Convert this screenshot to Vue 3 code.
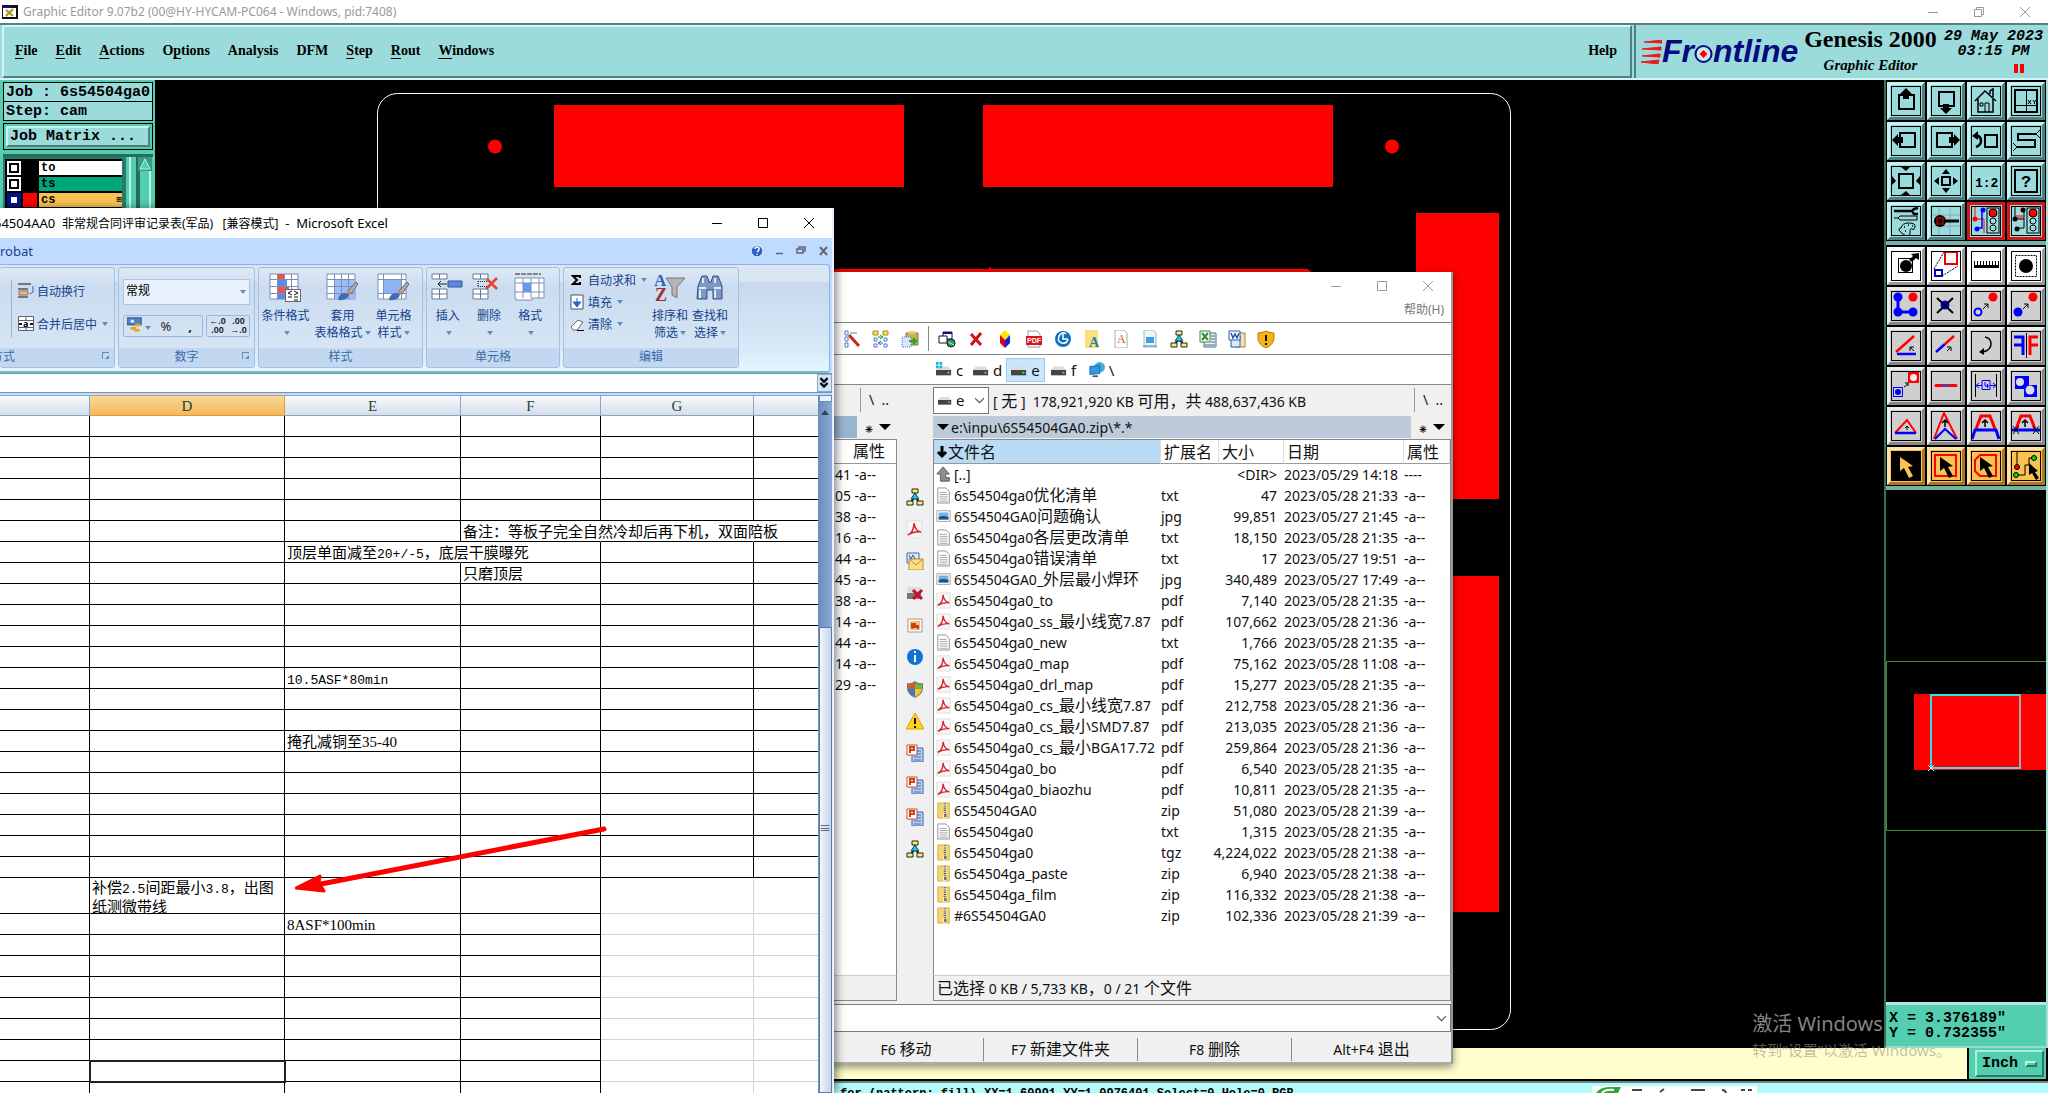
<script setup>
const menus = [
  ['', 'F', 'ile'], ['', 'E', 'dit'], ['', 'A', 'ctions'], ['O', 'p', 'tions'], ['Analysis', '', ''],
  ['DFM', '', ''], ['', 'S', 'tep'], ['', 'R', 'out'], ['', 'W', 'indows'],
]

const layers = [
  { name: 'to', bg: '#ffffff', color: '#000000' },
  { name: 'ts', bg: '#00a67c', color: '#000000' },
  { name: 'cs', bg: '#f9c252', color: '#ff0000', active: true },
]

const cursor = '<path d="M9 6v14l4-3 5 10 4-2-5-9 5-1z"/>'
const light = '<rect x="16" y="2" width="12" height="25" fill="none" stroke="#000"/><circle cx="22" cy="7" r="4" fill="#f00" stroke="#000"/><circle cx="22" cy="15" r="3" fill="none" stroke="#000"/><circle cx="22" cy="22" r="3" fill="none" stroke="#000"/>'
const smallArrow = '<path d="M12 18l5-5M13 13h4v4" fill="none" stroke="#000"/>'
const upArrow = '<path d="M14 16v-7M11 12l3-3 3 3" fill="none" stroke="#000" stroke-width="1.5"/>'

const viewTools = [
  ['Pan up', '<rect x="8" y="9" width="15" height="14" fill="none" stroke="#000" stroke-width="2"/><path d="M15 2l6 6h-3v5h-6v-5h-3z"/>'],
  ['Pan down', '<rect x="8" y="6" width="15" height="14" fill="none" stroke="#000" stroke-width="2"/><path d="M12 18h6v4h3l-6 6-6-6h3z"/>'],
  ['Home', '<path d="M4 15l10-10 11 10M7 13v13h15V13M19 8V5l3-2v8" fill="none" stroke="#000" stroke-width="1.5"/><path d="M14 26v-9h4v9M9 17h3v3h-3z" fill="none" stroke="#000"/>'],
  ['Coordinates', '<rect x="4" y="4" width="22" height="22" fill="none" stroke="#000" stroke-width="2"/><path d="M15.500 4v22M4 19.500h22M17 14l3 4M20 14l-3 4M22 14l1.500 2 1.500-2M23.500 16v2" fill="none" stroke="#000"/>'],
  ['Pan left', '<rect x="9" y="7" width="15" height="14" fill="none" stroke="#000" stroke-width="2"/><path d="M1 14l6-6v3h5v6h-5v3z"/>'],
  ['Pan right', '<rect x="6" y="7" width="15" height="14" fill="none" stroke="#000" stroke-width="2"/><path d="M29 14l-6-6v3h-5v6h5v3z"/>'],
  ['Previous view', '<rect x="14" y="9" width="12" height="12" fill="none" stroke="#000" stroke-width="2"/><path d="M4 10h3q3 1 3 5t-5 6" fill="none" stroke="#000" stroke-width="2.500"/><path d="M1 10l6-5v9z"/>'],
  ['Serpentine', '<path d="M25 8H7v6h17v7H6" fill="none" stroke="#000" stroke-width="2"/><path d="M25 8l4-4M25 8l4 4M6 21l-4-4M6 21l-4 4" stroke="#000"/>'],
  ['Zoom out', '<rect x="8" y="8" width="14" height="14" fill="none" stroke="#000" stroke-width="2"/><path d="M10 1h9l-4 4zM10 29h9l-4-4zM1 10v9l4-4zM29 10v9l-4-4z"/>'],
  ['Zoom in', '<rect x="11" y="11" width="8" height="8" fill="none" stroke="#000" stroke-width="2"/><path d="M11 8h8l-4-5zM11 22h8l-4 5zM8 11v8l-5-4zM22 11v8l5-4z"/>'],
  ['Scale', '<text x="4" y="21" font-family="Liberation Mono" font-weight="700" font-size="13">1:2</text>'],
  ['Query', '<rect x="4" y="4" width="22" height="22" fill="none" stroke="#000" stroke-width="2"/><text x="10" y="21" font-family="Liberation Mono" font-weight="700" font-size="17">?</text>'],
  ['Setup', '<path d="M3 5h17M27 2l-4 1-2 2 2 3 4 0" fill="none" stroke="#000" stroke-width="2.500"/><path d="M3 12h4l2-2h17v4H9l-2-2M10 22q1-5 8-5t6 4-3 2-2 4-7 1-2-6z" fill="none" stroke="#000"/><path d="M13 21h1M17 19h1M21 20h1M14 25h1" stroke="#000" stroke-width="1.500"/>'],
  ['Grid snap', '<path d="M8 0v30M19 0v30M0 9h30M0 20h30" stroke="#8ab" /><circle cx="9" cy="15" r="6"/><rect x="6" y="12" width="6" height="6" fill="none" stroke="#f00"/><path d="M14 15h14" stroke="#000" stroke-width="3"/>'],
  ['Online check', '<path d="M4 1v12h9v14" fill="none" stroke="#f00"/><path d="M11 4v18H5" fill="none" stroke="#00f" stroke-width="1.500"/><circle cx="4" cy="13" r="2.500" fill="#f00"/><circle cx="12" cy="4" r="2.500" fill="#00f"/><circle cx="6" cy="23" r="2.500" fill="#00f"/>' + light, 'red'],
  ['Spacing check', '<path d="M4 1v12h9M13 4v18H7" fill="none" stroke="#000"/><path d="M6 13V9M8 13V9M10 13V9M12 13V9" stroke="#f00"/><circle cx="4" cy="13" r="2.500"/><circle cx="12" cy="4" r="2.500"/><circle cx="6" cy="23" r="2.500"/>' + light, 'red'],
]

const editTools = [
  ['Resize', '<rect x="7.500" y="7.500" width="14" height="14" fill="none" stroke="#000"/><circle cx="15" cy="15" r="6"/><path d="M18 9l4-4-2-2 8-1v7l-3-2-4 4z"/>', 'white'],
  ['Transform', '<path d="M3 18L13 1M11 25l16-10" stroke="#000" stroke-dasharray="2 1"/><rect x="14" y="1" width="12" height="12" fill="none" stroke="#e00" stroke-width="2"/><rect x="4" y="19" width="7" height="6" fill="none" stroke="#00c" stroke-width="2"/>', 'white'],
  ['Measure', '<path d="M3 17h25V10h-1v4h-2v-4h-1v4h-2v-4h-1v4h-2v-4h-1v4h-2v-4h-1v4h-2v-4h-1v4h-2v-4H9v4H7v-4H6v4H4v-4H3z"/>', 'white'],
  ['Select pad', '<rect x="4.500" y="4.500" width="21" height="21" fill="none" stroke="#000" stroke-dasharray="2 1"/><circle cx="15" cy="15" r="7"/>', 'white'],
  ['Copy pad', '<path d="M7 6v15h15" fill="none" stroke="#00f" stroke-width="3"/><circle cx="7" cy="6" r="4.500" fill="#00f"/><circle cx="7" cy="21" r="4.500" fill="#00f"/><circle cx="22" cy="21" r="4.500" fill="#00f"/><circle cx="22" cy="6" r="4.500" fill="#f00"/>'],
  ['Delete', '<circle cx="14" cy="14" r="4.500" fill="#00f"/><path d="M6 7l16 15M22 7L6 22" stroke="#000" stroke-width="2"/>'],
  ['Copy', '<circle cx="7" cy="21" r="3.500" fill="none" stroke="#00f" stroke-width="2"/><circle cx="22" cy="6" r="4.500" fill="#f00"/>' + smallArrow],
  ['Move', '<circle cx="7" cy="21" r="4.500" fill="#00f"/><circle cx="22" cy="6" r="4.500" fill="#f00"/>' + smallArrow],
  ['Rotate line', '<path d="M6 23h19" stroke="#00f" stroke-width="2.500"/><path d="M5 21L23 5" stroke="#f00" stroke-width="2.500"/><path d="M23 20l-4-4M19 20v-4h4" fill="none" stroke="#000"/>'],
  ['Stretch line', '<path d="M5 21l9-8" stroke="#00f" stroke-width="2.500"/><path d="M14 13l9-8" stroke="#f00" stroke-width="2.500"/><path d="M16 20l4-4M16 16h4v4" fill="none" stroke="#000"/>'],
  ['Turn', '<path d="M14 6q6 1 6 7t-8 8" fill="none" stroke="#000" stroke-width="1.500"/><path d="M8 21l5-4v7z"/>'],
  ['Mirror', '<path d="M15.500 2v25" stroke="#000"/><path d="M3 6h9v18M3 14h8" fill="none" stroke="#00f" stroke-width="3"/><path d="M27 6h-8v18M27 14h-8" fill="none" stroke="#f00" stroke-width="3"/>'],
  ['Replace', '<path d="M17 1h11v11H17z" fill="#f00"/><circle cx="22.500" cy="6.500" r="3.500" fill="#eee"/><rect x="2.500" y="16.500" width="9" height="9" fill="none" stroke="#00f"/><circle cx="7" cy="21" r="3" fill="#00f"/><path d="M13 16l4-3M14 12h3v3" fill="none" stroke="#000"/>'],
  ['Merge line', '<path d="M5 14.500h20" stroke="#f00" stroke-width="3" stroke-linecap="round"/><path d="M11 14.500h8" stroke="#44c" stroke-width="2"/>'],
  ['Gap', '<path d="M4.500 3v23M25.500 3v23" stroke="#000"/><path d="M5 14.500h6M19 14.500h6M8 12l-3 2.500 3 2.500M22 12l3 2.500-3 2.500M11 9.500h8v9h-8zM14 11v4h4M16.500 13v4" fill="none" stroke="#00f"/>'],
  ['Fill', '<path d="M4 5h14v9h8v12H13v-8H4z" fill="#00f"/><circle cx="9" cy="11" r="4" fill="#ddd"/><circle cx="19" cy="19" r="4.500" fill="#ddd"/>'],
  ['Triangle', '<path d="M4 22L16 9l9 13" fill="none" stroke="#f00" stroke-width="2"/><path d="M4 22h21" stroke="#00f" stroke-width="2.500"/><path d="M16 19v-4M14 17l2-2 2 2" fill="none" stroke="#000"/>'],
  ['Peak', '<path d="M3 28L13 2l13 26" fill="none" stroke="#f00" stroke-width="2"/><path d="M4 28l10-10 11 10" fill="none" stroke="#00f" stroke-width="2"/>' + upArrow],
  ['Trapeze', '<path d="M5 18L10 5h9l5 13" fill="none" stroke="#f00" stroke-width="3"/><path d="M1 28l3-9h21l3 9" fill="none" stroke="#00f" stroke-width="3"/>' + upArrow],
  ['Trapeze cut', '<path d="M5 18L10 5h9l5 13" fill="none" stroke="#f00" stroke-width="3"/><path d="M0 19h29" stroke="#00f" stroke-width="3"/><path d="M2 15l6 8M8 15l-6 8M22 15l6 8M28 15l-6 8" stroke="#000"/>' + upArrow],
  ['Select', '<path d="M0 0h30v30H0z"/><g fill="#f9c252">' + cursor + '</g>', 'gold'],
  ['Select frame', '<rect x="4" y="4" width="21" height="21" fill="none" stroke="#f00" stroke-width="2"/>' + cursor, 'gold'],
  ['Select polygon', '<path d="M9 4h16v21H9l-5-5V9z" fill="none" stroke="#f00" stroke-width="2"/>' + cursor, 'gold'],
  ['Select net', '<path d="M6 1v14M5 24h9V14h4V7h5" fill="none" stroke="#000"/><circle cx="6" cy="16" r="2.500" fill="#f00" stroke="#000"/><circle cx="5" cy="24" r="2.500" fill="#0d0" stroke="#000"/><circle cx="23" cy="7" r="2.500" fill="#0d0" stroke="#000"/><path d="M18 12v12l3-2 4 7 3-2-4-6 3-1z"/>', 'gold'],
]

const brush = '<path d="M30 9l-8 9 3 3 7-10z" fill="#a8adb5" stroke="#667"/><path d="M12 27q1-7 7-7l4 1q-1 7-11 6z" fill="#3d6cb4"/><path d="M20 18l4 4 1-2-3-3z" fill="#d58a3a"/>'
const gridIcon = (extra) => '<path d="M1 1h28v25H1z" fill="#fff" stroke="#7b90b5"/>' + extra + '<path d="M1 6.500h28M1 13.500h28M1 20.500h28M8.500 1v25M15.500 1v25M22.500 1v25" stroke="#7b90b5"/>'
const styleTools = [
  { lines: ['条件格式', ''], icon: gridIcon('<path d="M8 1h7v6H8zM8 13h12v7H8z" fill="#ee5148"/><path d="M8 7h10v6H8zM8 20h7v6H8z" fill="#5b8be8"/>') + '<rect x="16.500" y="16.500" width="15" height="12" fill="#fff" stroke="#667"/><path d="M23 18l-4 2 4 2M19 24h4M25 18l4 2-4 2M25 24h4M25 27h4" fill="none" stroke="#111"/>' },
  { lines: ['套用', '表格格式'], icon: gridIcon('<path d="M8 6h21v20H8z" fill="#9dbbf5"/>') + brush },
  { lines: ['单元格', '样式'], icon: '<path d="M1 1h28v25H1z" fill="#fff" stroke="#7b90b5"/><path d="M1 6.500h28M1 20.500h28M6.500 1v25M24.500 1v25" stroke="#7b90b5"/><path d="M7 7h17v13H7z" fill="#8fb2f4"/>' + brush },
]
const rows2 = '<path d="M1 1h15v5H1zM8.500 1v5M1 16h15v10H1zM1 21h15M8.500 16v10" fill="#fff" stroke="#667a9c"/>'
const cellTools = [
  { lines: ['插入', ''], icon: rows2 + '<path d="M17 8h14v6H17z" fill="#5b8be0" stroke="#3357a0"/><path d="M7 11h9M10 8l-3 3 3 3" fill="none" stroke="#222"/>' },
  { lines: ['删除', ''], icon: rows2 + '<path d="M6 8.500h10M6 13.500h10M6 8v6" stroke="#222" stroke-dasharray="1 1" fill="none"/><path d="M15 6l10 10M25 5L14 16" stroke="#e6402c" stroke-width="2.500"/>' },
  { lines: ['格式', ''], icon: '<path d="M1 1h26" stroke="#222" stroke-dasharray="5 1"/><path d="M1 5h29v20H18v2H2v-2H1zM1 10h29M1 19h29M9 5v20M17 5v20M25 5v20" fill="#fff" stroke="#7b90b5"/><path d="M9 10h8v9H9z" fill="#6a98ec"/>' },
]
const findTools = [
  { lines: ['排序和', '筛选'], icon: '<text x="0" y="13" font-size="17" font-family="Liberation Serif" font-weight="700" fill="#2f5fb8">A</text><text x="1" y="28" font-size="18" font-family="Liberation Serif" font-weight="700" fill="#a02c30">Z</text><path d="M12 5h19l-8 9v11l-5-3v-8z" fill="#b5b5b5" stroke="#777"/>' },
  { lines: ['查找和', '选择'], icon: '<path d="M4 13L8 3h5l2 6h2l2-6h5l4 10v13h-9v-9h-6v9H3z" fill="#7d97c4" stroke="#314e85"/><path d="M5 15h7M20 15h7M6 17v8M21 17v8M9 5v5M21 5v5" stroke="#dce8fb" stroke-width="2"/>' },
]

const cols = ['c', 'd', 'e', 'f', 'g', 'h']
const rowData = {
  5: { f: { t: '备注\uff1a等板子完全自然冷却后再下机\uff0c双面陪板' } },
  6: { e: { t: '顶层单面减至20+/-5\uff0c底层干膜曝死' } },
  7: { f: { t: '只磨顶层' } },
  12: { e: { t: '10.5ASF*80min' } },
  15: { e: { t: '掩孔减铜至35-40', serif: true } },
  22: { d: { t: '补偿2.5间距最小3.8\uff0c出图\n纸测微带线' } },
  23: { e: { t: '8ASF*100min', serif: true } },
}
const open = { 5: ['f', 'g'], 6: ['e'] }
const sheetRows = Array.from({ length: 32 }, (_, i) => ({
  tall: i === 22,
  cells: cols.map((c) => ({
    c,
    data: rowData[i] && rowData[i][c],
    open: !!(open[i] && open[i].includes(c)),
    light: i > 21 && (c === 'g' || c === 'h'),
    selected: i === 30 && c === 'd',
  })),
}))
const isCjk = (s) => /[\u3000-\u9fff\uff00-\uffef]/.test(s)
const parts = (s) => s.split(/([\u3000-\u9fff\uff00-\uffef]+)/).filter(Boolean)

const doc = '<path d="M2 1h9l4 4v13H2z" fill="#fff" stroke="#8a8a8a"/><path d="M4 6h8M4 8.500h9M4 11h9M4 13.500h9M4 16h9" stroke="#9a9a9a"/>'
const pdf = '<path d="M1 1h15v17H1z" fill="#f7f7f7" stroke="#ddd"/><path d="M2 15q6-3 6-12 1 8 7 9-7-1-13 3z" fill="none" stroke="#d3222a" stroke-width="1.500"/>'
const fileIcons = {
  up: '<path d="M8 1l7 8h-4v4h4v4H5V9H1z" fill="#8d8d8d" stroke="#555"/>',
  txt: doc,
  jpg: '<path d="M1 3h15v12H1z" fill="#fff" stroke="#999"/><path d="M3 5h11v8H3z" fill="#6fb0e8"/><path d="M3 10q5-2 11 0v3H3z" fill="#23507e"/>',
  pdf,
  zip: '<path d="M2 1h13v17H2z" fill="#f5d66b" stroke="#d2ac3c"/><path d="M8 1h4v17H8z" fill="#fff5cd"/><path d="M10 1v12" stroke="#555" stroke-width="3" stroke-dasharray="1 1"/><path d="M9 13h3v4H9z" fill="#777"/>',
}
fileIcons.tgz = fileIcons.zip
const files = [
  ['[..]', '', '<DIR>', '2023/05/29 14:18', '----', 'up'],
  ['6s54504ga0优化清单', 'txt', '47', '2023/05/28 21:33'],
  ['6S54504GA0问题确认', 'jpg', '99,851', '2023/05/27 21:45'],
  ['6s54504ga0各层更改清单', 'txt', '18,150', '2023/05/28 21:35'],
  ['6s54504ga0错误清单', 'txt', '17', '2023/05/27 19:51'],
  ['6S54504GA0_外层最小焊环', 'jpg', '340,489', '2023/05/27 17:49'],
  ['6s54504ga0_to', 'pdf', '7,140', '2023/05/28 21:35'],
  ['6s54504ga0_ss_最小线宽7.87', 'pdf', '107,662', '2023/05/28 21:36'],
  ['6s54504ga0_new', 'txt', '1,766', '2023/05/28 21:35'],
  ['6s54504ga0_map', 'pdf', '75,162', '2023/05/28 11:08'],
  ['6s54504ga0_drl_map', 'pdf', '15,277', '2023/05/28 21:35'],
  ['6s54504ga0_cs_最小线宽7.87', 'pdf', '212,758', '2023/05/28 21:36'],
  ['6s54504ga0_cs_最小SMD7.87', 'pdf', '213,035', '2023/05/28 21:36'],
  ['6s54504ga0_cs_最小BGA17.72', 'pdf', '259,864', '2023/05/28 21:36'],
  ['6s54504ga0_bo', 'pdf', '6,540', '2023/05/28 21:35'],
  ['6s54504ga0_biaozhu', 'pdf', '10,811', '2023/05/28 21:35'],
  ['6S54504GA0', 'zip', '51,080', '2023/05/28 21:39'],
  ['6s54504ga0', 'txt', '1,315', '2023/05/28 21:35'],
  ['6s54504ga0', 'tgz', '4,224,022', '2023/05/28 21:38'],
  ['6s54504ga_paste', 'zip', '6,940', '2023/05/28 21:38'],
  ['6s54504ga_film', 'zip', '116,332', '2023/05/28 21:38'],
  ['#6S54504GA0', 'zip', '102,336', '2023/05/28 21:39'],
]
const leftRows = ['41', '05', '38', '16', '44', '45', '38', '14', '44', '14', '29']

const tree = '<path d="M9 4v6M9 9l-4 5M9 9l4 5" stroke="#111" stroke-width="2"/><path d="M6 1h6v4H6zM1 13h6v4H1zM11 13h6v4h-6z" fill="#f4ee7a" stroke="#222"/><path d="M9 5l4 6H5z" fill="#2cc1d8" stroke="#145"/>'
const ppt = '<path d="M6 4h11v14H6z" fill="#b9d4f5" stroke="#3d62a8"/><path d="M8 7h7M8 10h7M8 13h7M8 16h7" stroke="#3d62a8"/><path d="M1 1h10v10H1z" fill="#fff" stroke="#c34a2c"/><path d="M4 9V3h4v3H4" fill="none" stroke="#d0401e" stroke-width="2"/>'
const sideIcons = [
  ['Tree', tree], ['PDF', pdf],
  ['Mail', '<path d="M1 1h12v10H1z" fill="#dfeaff" stroke="#4466a8"/><path d="M3 7h14v11H3z" fill="#fbdf86" stroke="#b98e30"/><path d="M3 7l7 6 7-6" fill="none" stroke="#b98e30"/><path d="M3 3l2 4 2-4 2 4" stroke="#2853a5" fill="none"/>'],
  ['Disconnect', '<path d="M2 3h12l2 6H1z" fill="#ddd"/><path d="M1 9h14v6H1z" fill="#777"/><path d="M7 6l9 9M16 6l-9 9" stroke="#c8102e" stroke-width="3"/>'],
  ['Picture', '<path d="M2 3h14v13H2z" fill="#fff" stroke="#999"/><path d="M4 5h10v9H4z" fill="#f9c069"/><path d="M5 12V7h5v2h3v4h-2v-1H7v1z" fill="#c8401a"/>'],
  ['Info', '<circle cx="9" cy="9" r="8" fill="#0b74d4"/><path d="M9 7v7M9 3v2" stroke="#fff" stroke-width="2"/>'],
  ['Shield', '<path d="M9 1q4 3 8 2v6q-1 6-8 9-7-3-8-9V3q4 1 8-2z" fill="#777"/><path d="M9 3v6H2V4q4 1 7-1z" fill="#e2531f"/><path d="M9 3v6h7V4q-4 1-7-1z" fill="#6fb63a"/><path d="M9 9v8q-6-3-7-8z" fill="#2f7ad6"/><path d="M9 9v8q6-3 7-8z" fill="#f4c228"/>'],
  ['Warning', '<path d="M9 1l9 16H0z" fill="#ffd21f" stroke="#dba500"/><path d="M9 6v6M9 14v2" stroke="#111" stroke-width="2"/>'],
  ['Slides', ppt], ['Slides', ppt], ['Slides', ppt], ['Tree', tree],
]
const tbLeft = [
  ['Select', '<path d="M2 1h3v4H2zM2 7h3v4H2zM2 13h3v4H2z" fill="#fff" stroke="#57c"/><path d="M7 3h7" stroke="#57c"/><path d="M6 5l10 11" stroke="#c2281c" stroke-width="3"/>'],
  ['Sync', '<path d="M1 1h5v4H1zM11 1h5v4h-5z" fill="#f5df6a" stroke="#a98a1e"/><path d="M2 8h3v3H2zM2 14h3v3H2zM12 8h3v3h-3zM12 14h3v3h-3z" fill="#fff" stroke="#57c"/><path d="M6 7h5M8 5l3 2-3 2" stroke="#2a9d2a" fill="none"/><path d="M11 13H6M9 11l-3 2 3 2" stroke="#27c" fill="none"/>'],
  ['Paste', '<path d="M5 3h12v12H5z" fill="#c9b052" stroke="#776"/><path d="M8 1h6v3H8z" fill="#e8d25a"/><path d="M1 7h9v10H1z" fill="#d8e4ff" stroke="#57c" stroke-dasharray="1 1"/><path d="M8 11h7M12 8l3 3-3 3" stroke="#2a9d2a" stroke-width="2" fill="none"/>'],
]
const tbRight = [
  ['Network', '<path d="M5 2h9v7H5z" fill="#fff" stroke="#118"/><path d="M5 2h9v2H5z" fill="#118"/><path d="M1 6h8v7H1z" fill="#fff" stroke="#111"/><circle cx="13" cy="13" r="4" fill="#2a9d7a" stroke="#111"/><path d="M10 12l6 3" stroke="#eee850"/>'],
  ['Delete', '<path d="M4 4l10 11M14 3L4 15" stroke="#d40f1c" stroke-width="3"/>'],
  ['Cube', '<path d="M9 0l5 5-5 5-5-5z" fill="#ffe800"/><path d="M4 5l5 5v8l-5-5z" fill="#e00010"/><path d="M14 5l-5 5v8l5-5z" fill="#1023d8"/>'],
  ['PDF', '<path d="M3 1h9l3 3v13H3z" fill="#fff" stroke="#999"/><path d="M1 6h16v9H1z" fill="#d7141f"/><text x="2" y="13" font-size="7" font-family="Liberation Sans" font-weight="700" fill="#fff">PDF</text>'],
  ['Update', '<circle cx="9" cy="9" r="8" fill="#0f6fc0"/><path d="M9 4v5h5M5 6q-2 6 3 7t6-4M12 4q-4-3-7 2" fill="none" stroke="#fff" stroke-width="1.500"/>'],
  ['Font', '<path d="M2 0h13v18H2z" fill="#fadf7c"/><text x="6" y="17" font-size="14" font-family="Liberation Serif" font-weight="700" fill="#1d7fae">A</text>'],
  ['Text', '<path d="M3 0h9l3 3v15H3z" fill="#fff" stroke="#aaa"/><text x="5" y="13" font-size="12" font-family="Liberation Serif" fill="#e8501e">A</text>'],
  ['Computer', '<path d="M3 0h9l3 3v15H3z" fill="#eef5fb" stroke="#9bb"/><path d="M5 7h8v6H5z" fill="#3aa0e0"/><path d="M2 15h14v2H2z" fill="#8fb6d0"/>'],
  ['Tree', tree],
  ['Excel', '<path d="M5 3h12v14H5z" fill="#e7f2e6" stroke="#4a6a9a"/><path d="M12 6h4M12 9h4M12 12h4M6 15h10" stroke="#4a6a9a"/><path d="M1 1h10v11H1z" fill="#fff" stroke="#2e8b3a"/><path d="M3 3l6 7M9 3l-6 7" stroke="#2e8b3a" stroke-width="2"/>'],
  ['Word', '<path d="M7 3h10v14H7z" fill="#f4e3b4" stroke="#a8842e"/><path d="M3 6h9v11H3z" fill="#dce8fb" stroke="#3458a4"/><path d="M1 1h11v9H1z" fill="#fff" stroke="#3458a4"/><path d="M3 3l2 5 2-4 2 4 2-5" stroke="#2450b0" stroke-width="1.500" fill="none"/>'],
  ['Security', '<path d="M9 1q4 2 8 2v6q-1 6-8 9-7-3-8-9V3q4 0 8-2z" fill="#f6b21a" stroke="#b97a08"/><path d="M9 5v6M9 13v2" stroke="#111" stroke-width="2"/>'],
]
const drive = '<path d="M3 5h11l3 4H0z" fill="#dcdcdc"/><path d="M0 9h17v6H0z" fill="#444"/><path d="M13 12h2" stroke="#3f4" stroke-width="2"/>'
const drives = ['c', 'd', 'e', 'f']
</script>

<template>
  <div class="desktop">
    <header class="titlebar">
      <svg width="16" height="14" viewBox="0 0 16 14"><path d="M0 0h16v14H0z" fill="#111" /><path d="M1 3h13v9H1z" fill="#fff" /><path d="M1 1h9v2H1z" fill="#118" /><path d="M4 5l7 6M11 4l-7 7" stroke="#a90" stroke-width="2" /></svg>
      <h1>Graphic Editor 9.07b2 (00@HY-HYCAM-PC064 - Windows, pid:7408)</h1>
      <div class="wincontrols">
        <button aria-label="Minimize"><svg viewBox="0 0 10 10"><path d="M0 5.500h10" /></svg></button>
        <button aria-label="Restore"><svg viewBox="0 0 10 10"><path d="M.5 2.500h7v7h-7zM2.500 2.500v-2h7v7h-2" /></svg></button>
        <button aria-label="Close"><svg viewBox="0 0 10 10"><path d="M0 0l10 10M10 0L0 10" /></svg></button>
      </div>
    </header>

    <div class="topbar">
      <nav class="menubar">
        <button v-for="m in menus" :key="m.join('')">{{ m[0] }}<u>{{ m[1] }}</u>{{ m[2] }}</button>
        <button class="help">Help</button>
      </nav>
      <div class="brand">
        <div class="logo">
          <svg width="21" height="24" viewBox="0 0 21 24"><path d="M3 2l18-2v3zM1 9l19-2v3zM1 16l18-2v3zM0 22l18-2-1 4z" fill="#f01818" stroke="#f01818" /></svg>
          <span>Fr</span>
          <svg class="o" width="19" height="20" viewBox="0 0 19 20"><circle cx="9.500" cy="10" r="8" fill="#c9e8f4" stroke="#0a0a80" stroke-width="2" /><path d="M9.500 6l4 4-4 4-4-4z" fill="#f00" /></svg>
          <span>ntline</span>
        </div>
        <div class="product"><strong>Genesis 2000</strong><em>Graphic Editor</em></div>
        <div class="clock"><span>29 May 2023</span><span>03:15 PM</span><i></i></div>
      </div>
    </div>

    <div class="work">
      <aside class="job">
        <div class="jobinfo"><span>Job : 6s54504ga0</span><span>Step: cam</span></div>
        <div class="matrix"><button>Job Matrix ...</button></div>
        <div class="layerwrap">
          <ul class="layers">
            <li v-for="l in layers" :key="l.name">
              <b :class="{ on: l.active }"></b>
              <i :style="{ background: l.color }"></i>
              <span :style="{ background: l.bg }">{{ l.name }}<small v-if="l.active">⊞</small></span>
            </li>
          </ul>
          <div class="rails"></div>
          <div class="lscroll"><svg width="14" height="14" viewBox="0 0 14 14"><path d="M0 0h14v14H0z" fill="#3a9a84" /><path d="M7 2l5 10H2z" fill="#53cfb0" stroke="#b8f5e4" /></svg></div>
        </div>
      </aside>
      <svg class="canvas" aria-label="Panel drawing">
        <rect x="222.500" y="13.500" width="1133" height="936" rx="20" fill="none" stroke="#fff" />
        <g fill="#f00">
          <rect x="399" y="25" width="350" height="82" />
          <rect x="828" y="25" width="350" height="82" />
          <rect x="1261" y="133" width="83" height="286" />
          <rect x="1261" y="496" width="83" height="336" />
          <circle cx="340" cy="66.500" r="7" />
          <circle cx="1237" cy="66.500" r="7" />
          <path d="M670 189h163l2-2 2 2h316l8 8H670z" />
        </g>
      </svg>
      <aside class="tools">
        <div class="toolgrid">
          <button v-for="t in viewTools" :key="t[0]" class="teal" :class="t[2]" :aria-label="t[0]"><svg viewBox="0 0 30 30" v-html="t[1]"></svg></button>
        </div>
        <div class="toolgrid">
          <button v-for="t in editTools" :key="t[0]" :class="t[2]" :aria-label="t[0]"><svg viewBox="0 0 30 30" v-html="t[1]"></svg></button>
        </div>
        <div class="overview">
          <svg width="160" height="171" viewBox="0 0 160 171">
            <path d="M162 .5H.5v169H162" fill="none" stroke="#4c8a2c" />
            <path d="M28 33h132v76H28z" fill="#f00" />
            <path d="M45 107V34h89" fill="none" stroke="#3fdbe6" stroke-width="2" />
            <path d="M134 33v74" stroke="#aaa" stroke-width="2" />
            <path d="M45 107h90" stroke="#3fdbe6" stroke-width="2" />
            <path d="M42 104l6 6M48 104l-6 6" stroke="#aff" />
          </svg>
        </div>
        <div class="coords"><span>X = 3.376189"</span><span>Y = 0.732355"</span></div>
      </aside>
    </div>

    <div class="cmdline">
      <input aria-label="Command" />
      <div class="unit"><button>Inch<i></i></button></div>
    </div>
    <footer class="status">
      <span>for (pattern: fill) XX=1.60991 YY=1.0976401 Select=0 Hole=0 RGB</span>
      <div class="ime"><svg width="160" height="7" viewBox="0 0 160 7"><path d="M0 7Q4 1 13 1h12l-3 6z" fill="#33a340" /><path d="M6 7q3-4 12-3" stroke="#fff" fill="none" stroke-width="2" /><path d="M36 4h10M64 6l4-3M95 4h14M126 4q4 0 4 4M145 4h4M152 4h4" stroke="#445" stroke-width="2" fill="none" /></svg></div>
    </footer>

    <section class="commander">
      <div class="tctitle">
        <div class="wincontrols">
          <button aria-label="Minimize"><svg viewBox="0 0 10 10"><path d="M0 5.500h10" /></svg></button>
          <button aria-label="Maximize"><svg viewBox="0 0 10 10"><path d="M.5.5h9v9h-9z" /></svg></button>
          <button aria-label="Close"><svg viewBox="0 0 10 10"><path d="M0 0l10 10M10 0L0 10" /></svg></button>
        </div>
      </div>
      <div class="tcmenu"><button>帮助(H)</button></div>
      <div class="tctools">
        <button v-for="t in tbLeft" :key="t[0]" :aria-label="t[0]"><svg viewBox="0 0 18 18" v-html="t[1]"></svg></button>
        <hr />
        <button v-for="t in tbRight" :key="t[0]" :aria-label="t[0]"><svg viewBox="0 0 18 18" v-html="t[1]"></svg></button>
      </div>
      <div class="tcdrives">
        <button v-for="d in drives" :key="d" :class="{ sel: d === 'e' }">
          <svg viewBox="0 0 18 18"><g v-html="drive"></g><path v-if="d === 'c'" d="M0 0h3v3H0zM4 0h3v3H4zM0 4h3v3H0zM4 4h3v3H4z" fill="#19b5e0" /></svg>{{ d }}
        </button>
        <button><svg viewBox="0 0 18 18"><circle cx="12" cy="6" r="6" fill="#4aa9d8" /><path d="M1 5l11-1v9l-11 1z" fill="#2c9be6" stroke="#1465a8" /><path d="M4 16h6" stroke="#555" stroke-width="2" /></svg>\</button>
      </div>

      <div class="panes">
        <div class="leftpane">
          <div class="pinfo"><span class="nav">\ &nbsp;..</span></div>
          <div class="ppath"><div class="crumb active"></div><span>⁕</span><i class="tri"></i></div>
          <div class="plist">
            <div class="phead"><span>属性</span></div>
            <div v-for="(r, i) in leftRows" :key="i" class="prow">{{ r }} -a--</div>
          </div>
          <div class="pstat"></div>
        </div>
        <div class="midbar">
          <button v-for="(s, i) in sideIcons" :key="i" :aria-label="s[0]"><svg viewBox="0 0 18 18" v-html="s[1]"></svg></button>
        </div>
        <div class="rightpane">
          <div class="pinfo">
            <label class="combo"><svg viewBox="0 0 18 18" v-html="drive"></svg><select aria-label="Drive"><option>e</option></select><svg class="chev" viewBox="0 0 8 8"><path d="M0 2l4 4 4-4" fill="none" stroke="#555" /></svg></label>
            <span class="free">[ <b>无</b> ] &nbsp;178,921,920 KB <b>可用&#xFF0C;共</b> 488,637,436 KB</span>
            <span class="nav">\ &nbsp;..</span>
          </div>
          <div class="ppath"><div class="crumb"><i class="tri"></i>e:\inpu\6S54504GA0.zip\*.*</div><span>⁕</span><i class="tri"></i></div>
          <div class="plist">
            <table class="files">
              <colgroup><col class="w1" /><col class="w2" /><col class="w3" /><col class="w4" /><col class="w5" /></colgroup>
              <thead><tr><th class="sorted"><svg viewBox="0 0 12 14"><path d="M6 1v10M2 7l4 4 4-4" fill="none" stroke="#000" stroke-width="3" /></svg>文件名</th><th>扩展名</th><th>大小</th><th>日期</th><th>属性</th></tr></thead>
              <tbody>
                <tr v-for="(f, i) in files" :key="i">
                  <td><div class="fname"><svg viewBox="0 0 18 19" v-html="fileIcons[f[5] || f[1]]"></svg><span><span v-for="(p, j) in parts(f[0])" :key="j" :class="{ cjk: isCjk(p) }">{{ p }}</span></span></div></td>
                  <td>{{ f[1] }}</td><td><div class="num">{{ f[2] }}</div></td><td>{{ f[3] }}</td><td>{{ f[4] || '-a--' }}</td>
                </tr>
              </tbody>
            </table>
          </div>
          <div class="pstat"><b>已选择</b> 0 KB / 5,733 KB<b>&#xFF0C;</b>0 / 21 <b>个文件</b></div>
        </div>
      </div>
      <label class="tccmd"><input aria-label="Command line" /><svg viewBox="0 0 8 8"><path d="M0 2l4 4 4-4" fill="none" stroke="#555" /></svg></label>
      <div class="fkeys"><button>F6 <b>移动</b></button><button>F7 <b>新建文件夹</b></button><button>F8 <b>删除</b></button><button>Alt+F4 <b>退出</b></button></div>
    </section>

    <section class="excel">
      <div class="xtitle">
        <h2>54504AA0 &nbsp;<span>非常规合同评审记录表(军品) &nbsp;&nbsp;[兼容模式]</span> &nbsp;- &nbsp;Microsoft Excel</h2>
        <div class="wincontrols dark">
          <button aria-label="Minimize"><svg viewBox="0 0 10 10"><path d="M0 5.500h10" /></svg></button>
          <button aria-label="Maximize"><svg viewBox="0 0 10 10"><path d="M.5.5h9v9h-9z" /></svg></button>
          <button aria-label="Close"><svg viewBox="0 0 10 10"><path d="M0 0l10 10M10 0L0 10" /></svg></button>
        </div>
      </div>
      <div class="xtabs">
        <button>robat</button>
        <svg width="80" height="14" viewBox="0 0 80 14"><circle cx="7" cy="7" r="6" fill="#2a5fc8" stroke="#cfe0fa" stroke-width="1.500" /><path d="M5 5q0-2 2-2t2 2-2 3M7 10v1" stroke="#fff" fill="none" stroke-width="1.500" /><path d="M26 9.500h7M47 5h6v4h-6zM49 5V3h6v4h-2" stroke="#667" stroke-width="1.500" fill="none" /><path d="M70 3l7 8M77 3l-7 8" stroke="#667" stroke-width="2" /></svg>
      </div>
      <div class="ribbon">
        <div class="group align">
          <div class="gbody">
            <button><svg viewBox="0 0 16 16"><path d="M0 1h13M0 6h10M0 14h10" stroke="#777" stroke-width="2" /><path d="M1 8h9v4H1z" fill="#f6b878" stroke="#777" /><path d="M15 3v6l-3 2" fill="none" stroke="#2a5fc8" /></svg>自动换行</button>
            <button><svg viewBox="0 0 16 16"><path d="M.5.5h15v14H.5zM.5 4.500h15M.5 11.500h15M8 1v3M8 12v3" fill="#fff" stroke="#567" /><path d="M1 8h3M12 8h3" stroke="#111" stroke-width="2" /><text x="5" y="11" font-size="9" font-weight="700">a</text></svg>合并后居中<i class="dd"></i></button>
          </div>
          <footer>方式<s></s></footer>
        </div>
        <div class="group number">
          <div class="gbody">
            <select aria-label="数字格式"><option>常规</option></select><i class="dd over"></i>
            <div class="btnrow">
              <div><button aria-label="Currency"><svg viewBox="0 0 18 18"><path d="M0 2h16v8H0z" fill="#4f7fc8" stroke="#2a4a88" /><circle cx="6" cy="6" r="2" fill="#dfe9fb" /><path d="M4 14h6M9 10h6M8 16h6" stroke="#e3a51c" stroke-width="3" /></svg><i class="dd"></i></button><button>%</button><button><b>,</b></button></div>
              <div><button class="dec">←.0<br />.00</button><button class="dec">.00<br />→.0</button></div>
            </div>
          </div>
          <footer>数字<s></s></footer>
        </div>
        <div class="group style">
          <div class="gbody row"><button v-for="t in styleTools" :key="t.lines[0]" class="big"><svg viewBox="0 0 33 30" v-html="t.icon"></svg><span>{{ t.lines[0] }}</span><span>{{ t.lines[1] }}<i class="dd"></i></span></button></div>
          <footer>样式</footer>
        </div>
        <div class="group cells">
          <div class="gbody row"><button v-for="t in cellTools" :key="t.lines[0]" class="big"><svg viewBox="0 0 33 30" v-html="t.icon"></svg><span>{{ t.lines[0] }}</span><span>{{ t.lines[1] }}<i class="dd"></i></span></button></div>
          <footer>单元格</footer>
        </div>
        <div class="group edit">
          <div class="gbody row">
            <div class="stack">
              <button><svg viewBox="0 0 16 16"><path d="M11 6V4H4l4 4-4 4h7v-2" fill="none" stroke="#000" stroke-width="2" /></svg>自动求和<i class="dd"></i></button>
              <button><svg viewBox="0 0 16 16"><path d="M2 1h12v14H2z" fill="#fff" stroke="#456" /><path d="M8 4v5M4 8h8l-4 5z" fill="#2a64d0" stroke="#2a64d0" /></svg>填充<i class="dd"></i></button>
              <button><svg viewBox="0 0 16 16"><path d="M2 11l7-7 5 2-6 8H4z" fill="#fff" stroke="#667" /><path d="M8 14.500h7" stroke="#000" /></svg>清除<i class="dd"></i></button>
            </div>
            <button v-for="t in findTools" :key="t.lines[0]" class="big"><svg viewBox="0 0 33 30" v-html="t.icon"></svg><span>{{ t.lines[0] }}</span><span>{{ t.lines[1] }}<i class="dd"></i></span></button>
          </div>
          <footer>编辑</footer>
        </div>
      </div>
      <div class="formula"><input aria-label="编辑栏" /><button aria-label="Expand"><svg viewBox="0 0 10 10"><path d="M2 1l3 3 3-3M2 5l3 3 3-3" fill="none" stroke="#000" stroke-width="2" /></svg></button></div>
      <div class="sheetwrap">
        <div class="sheetbox">
          <table class="sheet">
            <colgroup><col class="c1" /><col class="c2" /><col class="c3" /><col class="c4" /><col class="c5" /><col class="c6" /></colgroup>
            <thead><tr><th></th><th class="cur">D</th><th>E</th><th>F</th><th>G</th><th></th></tr></thead>
            <tbody>
              <tr v-for="(r, i) in sheetRows" :key="i" :class="{ tall: r.tall }">
                <td v-for="c in r.cells" :key="c.c" :class="{ open: c.open, light: c.light, selected: c.selected, serif: c.data && c.data.serif }"><div v-if="c.data"><span v-for="(p, j) in parts(c.data.t)" :key="j" :class="{ half: !isCjk(p) }">{{ p }}</span></div></td>
              </tr>
            </tbody>
          </table>
          <svg class="pointer" width="314" height="72" viewBox="0 0 314 72"><path d="M309 5L26 60" stroke="#f00" stroke-width="5" stroke-linecap="round" /><path d="M1 64l24-12-1 7 5 8z" fill="#f00" stroke="#f00" stroke-width="3" stroke-linejoin="round" /></svg>
        </div>
        <div class="vscroll"><i class="split"></i><i class="up"></i><i class="thumb">≡</i></div>
      </div>
    </section>

    <div class="watermark"><p>激活 Windows</p><span>转到“设置”以激活 Windows。</span></div>
  </div>
</template>

<style>
body { overflow: hidden; background: #000; }
</style>

<style scoped>
*, *::after { box-sizing: border-box; }
button { border: 0; padding: 0; margin: 0; background: none; font: inherit; color: inherit; }
input, select { border: 0; padding: 0; margin: 0; font: inherit; color: inherit; appearance: none; min-width: 0; outline: 0; }
h1, h2, p, ul { margin: 0; padding: 0; list-style: none; }
h1, h2 { font-weight: 400; }
i { font-style: normal; }
.desktop { position: relative; height: 100vh; display: flex; flex-direction: column; overflow: hidden; background: #000; font-family: "Noto Sans", "Noto Sans CJK SC", sans-serif; }

.titlebar { height: 23px; flex: none; display: flex; align-items: center; gap: 5px; padding-left: 2px; background: #fff; }
.titlebar h1 { flex: 1; font-size: 12px; color: #999; }
.wincontrols { display: flex; color: #999; }
.wincontrols button { width: 46px; height: 22px; display: flex; align-items: center; justify-content: center; }
.wincontrols svg { width: 10px; height: 10px; fill: none; stroke: currentColor; overflow: visible; }
.wincontrols.dark { color: #000; }

.topbar { height: 57px; flex: none; display: flex; background: #9bdbdb; border-top: 2px solid #5a8080; border-bottom: 2px solid #d4f5f3; }
.menubar { flex: 1; display: flex; align-items: center; gap: 18px; padding: 0 13px 2px 11px; margin: 0 2px; border: 2px solid; border-color: #d4f5f3 #4f7f80 #4f7f80 #d4f5f3; font: 700 14px "Liberation Serif", serif; }
.menubar u { text-underline-offset: 3px; }
.help { margin-left: auto; }
.brand { width: 414px; display: flex; padding-left: 5px; border-left: 2px solid #4f7f80; color: #000; }
.logo { width: 161px; display: flex; align-items: center; color: #0a0a80; font: italic 700 32px "Liberation Sans", sans-serif; }
.logo .o { margin: 4px 0 0; }
.product { width: 137px; display: flex; flex-direction: column; align-items: center; font-family: "Liberation Serif", serif; white-space: nowrap; }
.product strong { font-size: 24px; line-height: 29px; }
.product em { font-size: 15px; font-weight: 700; line-height: 22px; }
.clock { flex: 1; display: flex; flex-direction: column; align-items: center; font: italic 700 15px/15px "Liberation Mono", monospace; padding-top: 4px; white-space: nowrap; }
.clock i { width: 10px; height: 9px; margin: 5px 0 0 50px; border: solid #f00; border-width: 0 4px; }

.work { flex: 1; display: flex; min-height: 0; }
.job { width: 155px; flex: none; background: #53cfb0; padding: 2px 2px 0 3px; font: 700 15px "Liberation Mono", monospace; }
.jobinfo span { display: block; height: 20px; line-height: 19px; padding-left: 2px; margin-bottom: -1px; border: 1px solid #000; background: #9bdbdb; white-space: nowrap; }
.matrix { margin-top: 3px; border: 1px solid #000; padding: 2px; }
.matrix button { display: block; width: 100%; height: 21px; text-align: left; line-height: 16px; padding-left: 2px; background: #9bdbdb; border: 2px solid; border-color: #c9f3f3 #4f7f80 #4f7f80 #c9f3f3; }
.layerwrap { display: flex; margin-top: 4px; height: 60px; border-top: 3px solid #276b60; }
.layers { width: 121px; padding-top: 2px; background: #000; border: 2px solid #2b7a68; font-size: 12px; }
.layers li { display: flex; gap: 2px; margin-bottom: 2px; height: 14px; padding-left: 2px; }
.layers b, .layers i { width: 14px; height: 14px; }
.layers b { background: #fff; border: 2px solid #fff; }
.layers b::after { content: ""; display: block; width: 10px; height: 10px; border: 2px solid #000; }
.layers b.on { border-color: #00108a; }
.layers b.on::after { border-color: #00108a; }
.layers span { flex: 1; display: flex; justify-content: space-between; line-height: 14px; padding-left: 2px; }
.layers small { font-size: 9px; }
.rails { width: 14px; background: linear-gradient(90deg, #2b7a68 0 2px, #53cfb0 2px 5px, #b8f5e4 5px 7px, #53cfb0 7px 12px, #276b60 12px); }
.lscroll { width: 15px; background: linear-gradient(90deg, #276b60 0 2px, #53cfb0 2px 11px, #b8f5e4 11px 13px, #53cfb0 13px); }
.canvas { flex: 1; min-width: 0; height: 100%; display: block; }

.tools { width: 164px; flex: none; display: flex; flex-direction: column; background: #000; border-left: 2px solid #2f7060; border-right: 2px solid #a7e0d8; }
.toolgrid { display: grid; grid-template-columns: repeat(4, 40px); padding-top: 1px; border-bottom: 4px solid #78b0a8; }
.toolgrid button { width: 38px; height: 38px; margin: 1px; padding: 1px; display: block; background: #cfcfcf; border: 3px solid; border-color: #eee #888 #888 #eee; }
.toolgrid svg { display: block; width: 30px; height: 30px; outline: 1px solid #000; outline-offset: -1px; }
.toolgrid button.teal { background: #9bdbdb; border-color: #c9f3f3 #4f7f80 #4f7f80 #c9f3f3; }
.toolgrid button.teal.red { border-color: #d01818; }
.toolgrid button.white { background: #fff; border-color: #fff #999 #999 #fff; }
.toolgrid button.gold { background: #f9c252; border-color: #ffe3a8 #a87820 #a87820 #ffe3a8; }
.overview { flex: 1; display: flex; align-items: center; }
.coords { height: 46px; display: flex; flex-direction: column; justify-content: center; padding-left: 3px; background: #53cfb0; border-top: 3px solid #b8e8dc; border-bottom: 2px solid #9bdbcb; font: 700 15px/15px "Liberation Mono", monospace; white-space: nowrap; }

.cmdline { height: 31px; flex: none; display: flex; }
.cmdline input { flex: 1; background: #ffffcd; }
.unit { width: 77px; margin-left: 2px; margin-right: 2px; background: #53cfb0; padding: 2px 2px 2px 6px; }
.unit button { width: 100%; height: 100%; display: flex; align-items: center; justify-content: space-between; padding: 0 5px; border: 2px solid; border-color: #a8f0dc #2b7a68 #2b7a68 #a8f0dc; font: 700 15px "Liberation Mono", monospace; }
.unit i { width: 12px; height: 6px; border: 2px solid; border-color: #b8f5e4 #2b7a68 #2b7a68 #b8f5e4; }
.status { height: 12px; flex: none; position: relative; margin-top: 2px; overflow: hidden; background: #b3fbfb; border-top: 2px solid #6c8484; padding: 4px 0 0 840px; font: 700 12px/14px "Liberation Mono", monospace; white-space: nowrap; }
.ime { position: absolute; right: 291px; top: 3px; width: 165px; background: #fff; padding-left: 4px; }
.ime svg { display: block; }

.commander { position: absolute; left: 820px; top: 272px; width: 633px; height: 792px; display: flex; flex-direction: column; background: #f0f0f0; border-right: 2px solid #999; border-bottom: 2px solid #aaa; box-shadow: 0 3px 8px rgba(0, 0, 0, .45); font-size: 14px; color: #111; }
.commander svg { width: 18px; height: 18px; flex: none; }
.tctitle { height: 28px; flex: none; display: flex; justify-content: flex-end; align-items: center; background: #fff; }
.commander .wincontrols svg { width: 10px; height: 10px; }
.tcmenu { height: 23px; flex: none; text-align: right; padding-right: 7px; background: #fff; border-bottom: 1px solid #888; font-size: 12px; line-height: 20px; color: #777; }
.tctools { height: 32px; flex: none; display: flex; align-items: center; gap: 11px; padding-left: 23px; background: #fff; border-bottom: 1px solid #888; }
.tctools svg { display: block; }
.tctools hr { width: 1px; height: 25px; margin: 0 -2px; border: 0; background: #888; }
.tcdrives { height: 30px; flex: none; display: flex; align-items: center; gap: 1px; padding-left: 111px; background: #fff; border-bottom: 1px solid #888; }
.tcdrives button { width: 37px; height: 22px; display: flex; align-items: center; justify-content: center; gap: 4px; font-size: 15px; }
.commander .tcdrives svg { width: 16px; height: 16px; }
.tcdrives .sel { background: #cbe6fb; outline: 1px solid #9bcdf0; }
.panes { flex: 1; display: flex; min-height: 0; }
.leftpane { width: 77px; display: flex; flex-direction: column; }
.midbar { width: 36px; display: flex; flex-direction: column; align-items: center; gap: 14px; padding-top: 103px; }
.midbar svg { display: block; }
.rightpane { flex: 1; display: flex; flex-direction: column; min-width: 0; }
.pinfo { height: 30px; flex: none; display: flex; align-items: center; padding: 1px 0; white-space: nowrap; }
.combo { width: 56px; height: 27px; display: flex; align-items: center; padding: 0 4px; gap: 4px; background: #fff; border: 1px solid #777; }
.combo select { flex: 1; background: none; font-size: 15px; }
.commander .combo svg { width: 14px; height: 14px; }
.commander .combo .chev { width: 9px; height: 9px; }
.free { padding-left: 4px; }
.commander b, .cjk { font-weight: 400; font-size: 16px; }
.nav { margin-left: auto; padding: 0 8px; border-left: 1px solid #999; line-height: 24px; }
.ppath { height: 24px; flex: none; display: flex; align-items: center; gap: 6px; padding-right: 6px; white-space: nowrap; }
.crumb { flex: 1; height: 22px; display: flex; align-items: center; gap: 2px; padding-left: 4px; margin-right: 2px; background: #bccada; }
.crumb.active { background: #99b4d1; }
.tri { border: 6px solid transparent; border-top: 6px solid #000; border-bottom: 0; }
.plist { flex: 1; background: #fff; border: solid #888; border-width: 1px 1px 0; min-height: 0; overflow: hidden; }
.leftpane .plist { border-left: 0; }
.phead { height: 24px; line-height: 22px; font-size: 16px; border-bottom: 1px solid #999; text-align: right; padding-right: 11px; }
.prow { height: 21px; line-height: 21px; text-align: right; padding-right: 20px; }
.pstat { height: 26px; flex: none; margin-bottom: 3px; padding-left: 3px; line-height: 24px; border: solid #888; border-width: 0 1px 1px; border-top: 1px solid #ccc; white-space: nowrap; }
.files { width: 100%; table-layout: fixed; border-collapse: separate; border-spacing: 0; white-space: nowrap; }
.w1 { width: 227px; } .w2 { width: 58px; } .w3 { width: 65px; } .w4 { width: 120px; } .w5 { width: auto; }
.files th { height: 24px; padding: 0 0 0 3px; text-align: left; font-weight: 400; font-size: 16px; line-height: 22px; border-bottom: 1px solid #999; border-right: 1px solid #ddd; }
.commander .files th svg { width: 12px; height: 14px; vertical-align: -1px; }
.files .sorted { background: #b9dcf4; padding-left: 2px; }
.files td { height: 21px; padding: 0; line-height: 20px; overflow: visible; }
.num { display: flex; justify-content: flex-end; padding-right: 7px; }
.fname { display: flex; align-items: center; gap: 2px; padding-left: 2px; height: 21px; }
.commander .fname svg { width: 16px; height: 17px; }
.tccmd { height: 28px; flex: none; display: flex; align-items: center; background: #fff; border: 1px solid #777; padding-right: 4px; }
.tccmd input { flex: 1; background: none; }
.commander .tccmd svg { width: 9px; height: 9px; }
.fkeys { height: 30px; flex: none; display: grid; grid-template-columns: 164px 154px 154px 1fr; align-items: center; padding-top: 4px; }
.fkeys button { height: 23px; line-height: 22px; border-right: 1px solid #888; }
.fkeys button:first-child { padding-left: 9px; }
.fkeys button:last-child { border: 0; }

.excel { position: absolute; left: 0; top: 208px; bottom: 0; width: 834px; display: flex; flex-direction: column; overflow: hidden; background: #bfdbff; border-right: 2px solid #e8f2ff; color: #15428b; font-size: 12px; box-shadow: 3px 0 8px rgba(0, 0, 0, .45); }
.xtitle { height: 30px; flex: none; display: flex; justify-content: space-between; align-items: center; background: #fff; color: #000; white-space: nowrap; }
.xtitle h2 { font-size: 13px; margin-left: -6px; }
.xtitle h2 span { font-size: 12px; }
.xtabs { height: 26px; flex: none; display: flex; justify-content: space-between; align-items: center; padding-right: 2px; font-size: 13px; }
.ribbon { height: 109px; flex: none; display: flex; gap: 3px; padding: 2px 0 3px; margin-right: 2px; border: 1px solid #8db2e3; border-left: 0; border-bottom: 2px solid #7fb8c8; border-radius: 0 4px 4px 0; background: linear-gradient(#dbe6f4 0 15%, #c7d8ed 17%, #d8eaf8 80%, #e4f7ff); }
.group { display: flex; flex-direction: column; border: 1px solid #a3c0dd; border-radius: 3px; overflow: hidden; background: linear-gradient(#dfe9f5, #cbdcf0 20%, #d9e8f6); }
.group footer { height: 19px; flex: none; position: relative; text-align: center; line-height: 18px; background: #c1d8f0; color: #3e6aaa; }
.group s { position: absolute; right: 5px; top: 4px; width: 7px; height: 7px; border: 1px solid #6689b8; border-width: 1px 0 0 1px; }
.group s::after { content: ""; position: absolute; right: 0; bottom: 0; border: 2px solid #6689b8; border-top-color: transparent; border-left-color: transparent; }
.gbody { flex: 1; min-height: 0; }
.gbody svg { width: 16px; height: 16px; flex: none; }
.gbody.row { display: flex; padding-right: 8px; }
.align { width: 115px; border-left: 0; }
.align footer { text-align: left; margin-left: -9px; }
.align .gbody { display: flex; flex-direction: column; gap: 17px; margin: 12px 0 10px 11px; padding: 3px 0 0 6px; border-left: 1px solid #9bb; }
.align button, .stack button { display: flex; align-items: center; gap: 3px; height: 16px; white-space: nowrap; }
.dd { display: inline-block; border: 3px solid transparent; border-top: 4px solid #6689b8; border-bottom: 0; margin-left: 2px; vertical-align: 2px; }
.number { width: 137px; position: relative; }
.number .gbody { padding: 11px 4px 0; }
.number select { display: block; width: 100%; height: 26px; background: #e9f2fc; border: 1px solid #a9c5e3; padding: 0 2px 3px; color: #000; }
.dd.over { position: absolute; right: 8px; top: 22px; }
.btnrow { display: flex; justify-content: space-between; margin-top: 10px; color: #222; }
.btnrow > div { display: flex; height: 22px; border: 1px solid #9bb8dc; border-radius: 2px; }
.btnrow button { width: 24px; font-size: 13px; }
.btnrow button:first-child:not(.dec) { width: 30px; }
.btnrow .dec { width: 21px; font: 700 9px/9px "Liberation Sans", sans-serif; }
.style { width: 165px; } .cells { width: 134px; } .edit { width: 176px; }
.big { flex: 1 1 auto; display: flex; flex-direction: column; align-items: center; padding-top: 5px; white-space: nowrap; line-height: 17px; }
.cells .big { flex: 1 1 0; }
.gbody .big svg { width: 33px; height: 30px; margin-bottom: 4px; }
.big span { height: 17px; }
.stack { width: 86px; flex: none; display: flex; flex-direction: column; gap: 6px; padding: 4px 0 0 5px; }

.formula { height: 20px; flex: none; display: flex; background: #fff; border: solid #6f94c0; border-width: 1px 0; }
.formula input { flex: 1; }
.formula button { width: 15px; background: #d5e5f8; border: 1px solid #8ab; }
.formula svg { display: block; width: 12px; height: 12px; }
.sheetwrap { flex: 1; display: flex; min-height: 0; margin-top: 2px; }
.sheetbox { position: relative; width: 818px; overflow: hidden; background: #fff; }
.sheet { width: 818px; table-layout: fixed; border-collapse: separate; border-spacing: 0; color: #000; font: 15px "Noto Sans CJK SC", sans-serif; }
.c1 { width: 90px; } .c2 { width: 195px; } .c3 { width: 176px; } .c4 { width: 140px; } .c5 { width: 153px; } .c6 { width: 64px; }
.sheet th { height: 21px; padding: 2px 0 0; font: 15px/17px "Liberation Serif", serif; color: #243; background: linear-gradient(#f8fafd, #d6deea); border: solid #8da5c4; border-width: 1px 1px 1px 0; }
.sheet th.cur { background: linear-gradient(#f8d79b, #f4b95c); border-color: #e39b3a; }
.sheet th:last-child { border-right: 0; }
.sheet td { height: 21px; padding: 0 0 0 2px; border-right: 1px solid #000; border-bottom: 1px solid #000; }
.sheet td:last-child { border-right: 0; }
.sheet td.open { border-right-color: transparent; }
.sheet td.light { border-color: #ccd5de; }
.sheet td div { height: 20px; line-height: 19px; width: 0; white-space: pre; position: relative; z-index: 1; }
.sheet td .half { font: 13px "Liberation Mono", monospace; }
.sheet td.serif .half { font: 15px "Liberation Serif", serif; }
.sheet .tall td { height: 36px; }
.sheet .tall td div { height: 35px; line-height: 17px; }
.sheet td.selected { outline: 2px solid #222; outline-offset: -1px; }
.pointer { position: absolute; left: 295px; top: 429px; z-index: 2; }
.vscroll { flex: 1; display: flex; flex-direction: column; align-items: center; background: linear-gradient(90deg, #6a8cbc, #8aaad4); }
.split { width: 13px; height: 7px; background: #eaf2fb; border: 1px solid #6a8cbc; }
.up { margin-top: 8px; border: 4px solid transparent; border-top: 0; border-bottom: 5px solid #345; }
.thumb { width: 13px; flex: 1; margin-top: 212px; display: flex; align-items: center; justify-content: center; padding-bottom: 64px; font-size: 12px; color: #456; border: 1px solid #5a7cab; background: linear-gradient(90deg, #f0f5fb, #c5d4e8); }

.watermark { position: absolute; right: 97px; top: 1009px; color: rgba(150, 150, 150, .9); white-space: nowrap; pointer-events: none; }
.watermark p { font-size: 20px; line-height: 30px; }
.watermark span { font-size: 15px; line-height: 20px; color: rgba(150, 150, 140, .6); }
</style>
